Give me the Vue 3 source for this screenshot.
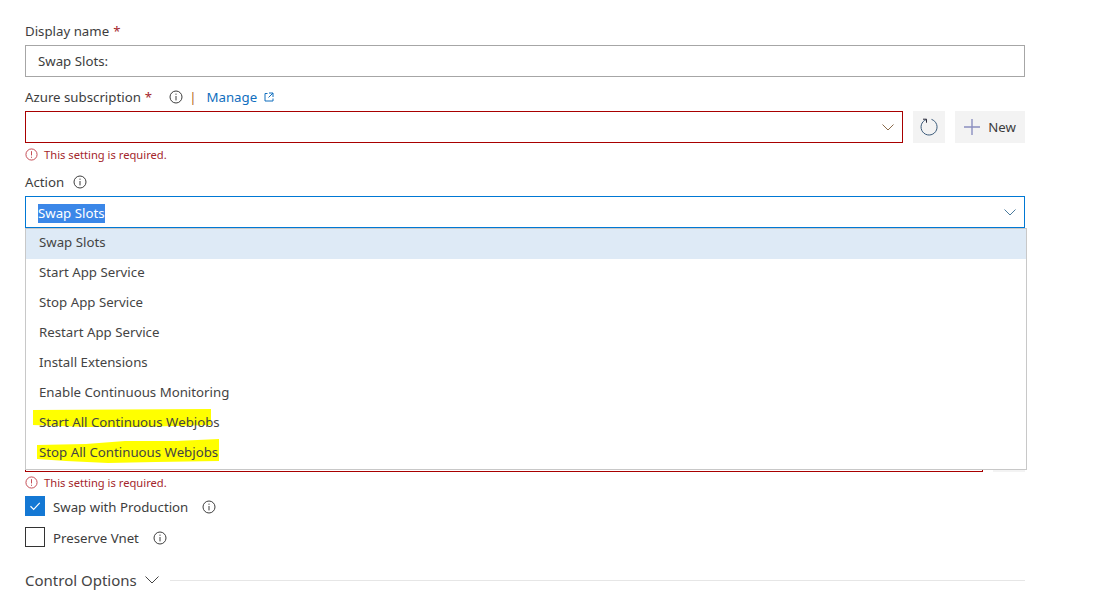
<script setup>
const actions = [
  'Swap Slots',
  'Start App Service',
  'Stop App Service',
  'Restart App Service',
  'Install Extensions',
  'Enable Continuous Monitoring',
  'Start All Continuous Webjobs',
  'Stop All Continuous Webjobs',
]
</script>

<template>
  <div class="page">
    <div class="field first">
      <div class="label">Display name <span class="req">*</span></div>
      <div class="input grey">Swap Slots:</div>
    </div>

    <div class="field">
      <div class="label">
        Azure subscription <span class="req">*</span>
        <svg class="info sub-info" viewBox="0 0 14 14"><circle cx="7" cy="7" r="6" /><path d="M7 6v4.400M7 3.600v1.200" /></svg>
        <span class="sep">|</span>
        <a class="manage">Manage</a>
        <svg class="ext" viewBox="0 0 10 10"><path d="M3.500 1.500H1v7.500h8V6.500M5 1h4v4M9 1 4.500 5.500" /></svg>
      </div>
      <div class="row">
        <div class="input red">
          <svg class="chev" viewBox="0 0 12 7"><path d="M.5.5 6 6 11.500.5" /></svg>
        </div>
        <button class="btn square">
          <svg class="refresh" viewBox="0 0 18 18"><path d="M11.500 1.400A8 8 0 1 1 6.300 1.500" /><path class="dark" d="M3 1.200h3.500v3.500" /></svg>
        </button>
        <button class="btn new">
          <svg class="plus" viewBox="0 0 16 16"><path d="M8 0v16M0 8h16" /></svg>
          New
        </button>
      </div>
      <div class="error">
        <svg class="err-icon" viewBox="0 0 14 14"><circle cx="7" cy="7" r="6" /><path d="M7 3.400v4.600M7 9.400v1.200" /></svg>
        This setting is required.
      </div>
    </div>

    <div class="field action">
      <div class="label">
        Action
        <svg class="info" viewBox="0 0 14 14"><circle cx="7" cy="7" r="6" /><path d="M7 6v4.400M7 3.600v1.200" /></svg>
      </div>
      <div class="input blue">
        <span class="selected">Swap Slots</span>
        <svg class="chev" viewBox="0 0 12 7"><path d="M.5.5 6 6 11.500.5" /></svg>
      </div>
      <div class="dropdown">
        <svg class="marker" viewBox="0 0 1002 242">
          <path d="M8 182 L186 181 L186 197 L111 199 L61 199 L8 197 Z" />
          <path d="M12 217 L61 216 L100 213 L151 213 L194 211 L194 233 L131 234 L83 235 L41 233 L12 231 Z" />
        </svg>
        <div v-for="(item, index) in actions" :key="item" :class="['option', { active: index === 0 }]">{{ item }}</div>
      </div>
    </div>

    <!-- fields hidden behind the open dropdown -->
    <div class="hidden-fields">
      <div class="row-hidden">
        <div class="hidden-input"></div>
        <div class="hidden-btn"></div>
      </div>
    </div>
    <div class="error second">
      <svg class="err-icon" viewBox="0 0 14 14"><circle cx="7" cy="7" r="6" /><path d="M7 3.400v4.600M7 9.400v1.200" /></svg>
      This setting is required.
    </div>

    <div class="check-row">
      <span class="box checked">
        <svg viewBox="0 0 20 20"><path d="M5 10.300 8.500 13.800 15.300 6.500" /></svg>
      </span>
      <span class="check-label">Swap with Production</span>
      <svg class="info gap" viewBox="0 0 14 14"><circle cx="7" cy="7" r="6" /><path d="M7 6v4.400M7 3.600v1.200" /></svg>
    </div>
    <div class="check-row next">
      <span class="box"></span>
      <span class="check-label">Preserve Vnet</span>
      <svg class="info gap" viewBox="0 0 14 14"><circle cx="7" cy="7" r="6" /><path d="M7 6v4.400M7 3.600v1.200" /></svg>
    </div>

    <div class="section">
      <span class="section-title">Control Options</span>
      <svg class="section-chev" viewBox="0 0 14 8"><path d="M.5.500 7 7 13.500.500" /></svg>
      <span class="rule"></span>
    </div>
  </div>
</template>

<style>
html, body {
  background: #fff;
}
</style>

<style scoped>
.page {
  width: 1000px;
  height: 612px;
  box-sizing: border-box;
  margin-left: 25px;
  padding-top: 22px;
  font-family: "Noto Sans", "Open Sans", sans-serif;
  font-size: 13.25px;
  color: #3d3d3d;
  overflow: visible;
}

.field {
  margin-top: 11px;
}

.field.first {
  margin-top: 0;
}

.field.action {
  position: relative;
  margin-top: 12px;
}

.label {
  display: flex;
  align-items: center;
  height: 18px;
  margin-bottom: 5px;
}

.req {
  color: #a4262c;
  margin-left: 4px;
}

.input {
  position: relative;
  display: flex;
  align-items: center;
  height: 32px;
  box-sizing: border-box;
  padding: 0 12px;
  background: #fff;
  line-height: 18px;
}

.grey {
  border: 1px solid #a6a6a6;
}

.red {
  flex: 1;
  border: 1px solid #a80000;
}

.blue {
  border: 1px solid #0078d4;
}

.selected {
  background: #3b87e8;
  color: #fff;
  line-height: 19px;
  margin-top: 2px;
}

.chev {
  position: absolute;
  right: 8px;
  top: 12px;
  width: 12px;
  height: 7px;
  fill: none;
  stroke: #8a6a4a;
  stroke-width: 1;
}

.blue .chev {
  stroke: #4a7a9c;
}

.info {
  width: 14px;
  height: 14px;
  margin-left: 9px;
  fill: none;
  stroke: #3d3d3d;
  stroke-width: 1;
}

.sub-info {
  margin-left: 17px;
}

.sep {
  margin-left: 6px;
  color: #b46a1e;
}

.manage {
  margin-left: 10px;
  color: #106ebe;
}

.ext {
  width: 10px;
  height: 10px;
  margin-left: 7px;
  fill: none;
  stroke: #106ebe;
  stroke-width: 1;
}

.row {
  display: flex;
  gap: 10px;
}

.btn {
  display: flex;
  align-items: center;
  justify-content: center;
  height: 32px;
  padding: 0;
  border: none;
  background: #f3f3f3;
  font: inherit;
  color: #3d3d3d;
}

.square {
  width: 32px;
}

.new {
  width: 70px;
  gap: 8px;
}

.refresh {
  width: 18px;
  height: 18px;
  fill: none;
  stroke: #3a5a7a;
  stroke-width: 1;
}

.refresh .dark {
  stroke: #2b2b3a;
}

.plus {
  width: 16px;
  height: 16px;
  fill: none;
  stroke: #8b8fc0;
  stroke-width: 1.4;
}

.error {
  display: flex;
  align-items: center;
  height: 14px;
  margin-top: 4px;
  font-size: 11.2px;
  color: #a4262c;
}

.err-icon {
  width: 13px;
  height: 13px;
  margin-right: 6px;
  fill: none;
  stroke: #c0404a;
  stroke-width: 1;
}

.dropdown {
  position: absolute;
  top: 55px;
  left: 0;
  width: 1002px;
  height: 242px;
  box-sizing: border-box;
  background: #fff;
  border: 1px solid #c8c8c8;
  z-index: 5;
}

.marker {
  position: absolute;
  left: -1px;
  top: -1px;
  width: 1002px;
  height: 242px;
  fill: #ffff00;
  stroke: none;
  pointer-events: none;
}

.option {
  position: relative;
  height: 30px;
  line-height: 26px;
  padding-left: 13px;
  color: #444;
}

.option.active {
  background: #deeaf6;
}

.hidden-fields {
  height: 244px;
}

.row-hidden {
  display: flex;
  align-items: flex-end;
  height: 100%;
  gap: 10px;
}

.hidden-input {
  flex: 1;
  height: 32px;
  box-sizing: border-box;
  border: 1px solid #a80000;
}

.hidden-btn {
  width: 32px;
  height: 32px;
  background: #f3f3f3;
}

.error.second {
  margin-top: 3px;
}

.check-row {
  display: flex;
  align-items: center;
  height: 20px;
  margin-top: 7px;
}

.check-row.next {
  margin-top: 11px;
}

.check-label {
  margin-top: 1px;
}

.box {
  display: block;
  width: 20px;
  height: 20px;
  box-sizing: border-box;
  margin-right: 8px;
  border: 1px solid #333;
}

.box.checked {
  background: #1478d4;
  border-color: #1478d4;
}

.box svg {
  display: block;
  width: 18px;
  height: 18px;
  fill: none;
  stroke: #fff;
  stroke-width: 1.3;
}

.gap {
  margin-left: 14px;
  margin-top: 1px;
}

.section {
  display: flex;
  align-items: center;
  height: 20px;
  margin-top: 23px;
}

.section-title {
  font-size: 15px;
  color: #444;
}

.section-chev {
  width: 14px;
  height: 8px;
  margin-left: 8px;
  fill: none;
  stroke: #444;
  stroke-width: 1;
}

.rule {
  flex: 1;
  height: 1px;
  margin-left: 11px;
  background: #e6e6e6;
}
</style>
